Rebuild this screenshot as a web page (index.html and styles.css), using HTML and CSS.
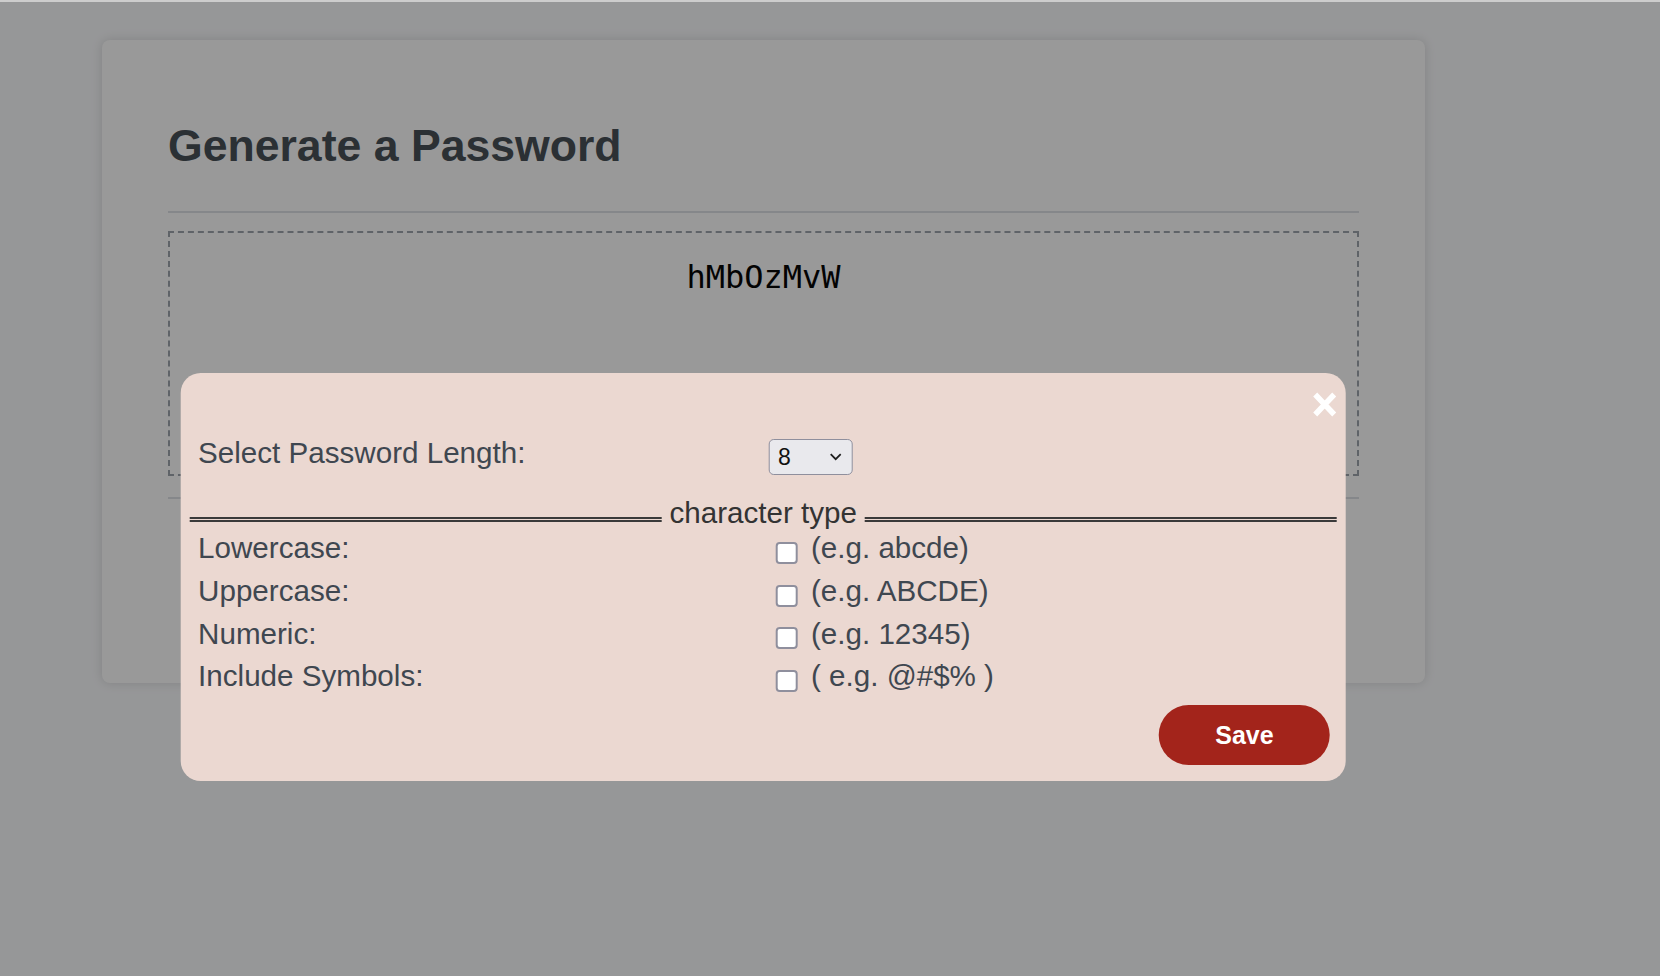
FILE: index.html
```html
<!DOCTYPE html>
<html lang="en">
<head>
<meta charset="utf-8">
<title>Generate a Password</title>
<link rel="stylesheet" href="styles.css">
</head>
<body>
<div class="topbar"></div>
<main class="page">
  <section class="card">
    <h1 class="title">Generate a Password</h1>
    <hr class="rule">
    <div class="output"><span class="password">hMbOzMvW</span></div>
    <hr class="rule rule-low">
  </section>

  <div class="overlay"></div>

  <div class="modal">
    <div class="modal-head">
      <button class="close" type="button" aria-label="Close">
        <svg width="24" height="25" viewBox="0 0 24 25"><path d="M2.5 2.5 L21.5 22.5 M21.5 2.5 L2.5 22.5" stroke="#ffffff" stroke-width="5.5" fill="none"/></svg>
      </button>
    </div>

    <div class="row length-row">
      <label class="label" for="len">Select Password Length:</label>
      <span class="select-wrap">
        <select id="len" class="select"><option>8</option></select>
        <svg class="chev" width="12" height="8" viewBox="0 0 12 8"><path d="M1 1.2 L6 6.2 L11 1.2" stroke="#1f1f1f" stroke-width="1.8" fill="none"/></svg>
      </span>
    </div>

    <div class="divider"><span class="divider-text">character type</span></div>

    <div class="row check-row">
      <span class="label">Lowercase:</span>
      <label class="check"><input type="checkbox" class="box"><span>(e.g. abcde)</span></label>
    </div>
    <div class="row check-row">
      <span class="label">Uppercase:</span>
      <label class="check"><input type="checkbox" class="box"><span>(e.g. ABCDE)</span></label>
    </div>
    <div class="row check-row">
      <span class="label">Numeric:</span>
      <label class="check"><input type="checkbox" class="box"><span>(e.g. 12345)</span></label>
    </div>
    <div class="row check-row">
      <span class="label">Include Symbols:</span>
      <label class="check"><input type="checkbox" class="box"><span>( e.g. @#$% )</span></label>
    </div>

    <div class="actions">
      <button class="save" type="button">Save</button>
    </div>
  </div>
</main>
</body>
</html>
```

FILE: styles.css
```css
html, body {
  margin: 0;
  padding: 0;
}

body {
  background: #fbfcfe;
  font-family: "Liberation Sans", Arial, sans-serif;
  width: 1660px;
  height: 976px;
  overflow: hidden;
}

.topbar {
  position: fixed;
  top: 0;
  left: 0;
  right: 0;
  height: 2px;
  background: #cdcdcd;
  z-index: 3;
}

.page {
  position: relative;
  width: 1323.4px;
  margin-left: 101.6px;
  padding-top: 40px;
}

.card {
  background: #ffffff;
  border-radius: 8px;
  box-shadow: 0 0 12px rgba(0, 0, 0, 0.14);
  padding: 79px 66px 184px 66.4px;
}

.title {
  margin: 0;
  font-size: 44.6px;
  line-height: 54px;
  font-weight: bold;
  color: #495057;
}

.rule {
  margin: 38px 0 0;
  height: 0;
  border: 0;
  border-top: 2px solid #dee2e6;
}

.rule-low {
  margin-top: 21px;
}

.output {
  margin-top: 18px;
  height: 245px;
  box-sizing: border-box;
  border: 2px dashed #9ea5ad;
  padding-top: 25px;
  text-align: center;
}

.password {
  font-family: "DejaVu Sans Mono", "Liberation Mono", monospace;
  font-size: 32px;
  line-height: 38px;
  color: #050505;
}

.overlay {
  position: fixed;
  inset: 0;
  background: rgba(0, 0, 0, 0.4);
  z-index: 1;
}

.modal {
  position: absolute;
  top: 373px;
  left: 50%;
  transform: translateX(-50%);
  width: 1164.6px;
  box-sizing: border-box;
  padding: 19px 8.6px 16px;
  background: #ebd8d1;
  border-radius: 20px;
  z-index: 2;
  font-size: 29.6px;
  color: #3f4750;
}

.modal-head {
  display: flex;
  justify-content: flex-end;
  height: 25px;
}

.close {
  display: block;
  width: 24px;
  height: 25px;
  padding: 0;
  margin: 0;
  border: 0;
  background: none;
}

.close svg {
  display: block;
}

.row {
  display: grid;
  grid-template-columns: 570.9px auto;
  padding-left: 8.5px;
}

.length-row {
  margin-top: 22px;
  align-items: start;
}

.length-row .label {
  line-height: 27.5px;
}

.select-wrap {
  position: relative;
  display: block;
  width: 84px;
  height: 36px;
}

.select {
  appearance: none;
  -webkit-appearance: none;
  display: block;
  width: 84px;
  height: 36px;
  box-sizing: border-box;
  margin: 0;
  padding: 0 0 0 8px;
  border: 1px solid #8f8f9d;
  border-radius: 5px;
  background: #e9e9ed;
  font-family: "Liberation Sans", Arial, sans-serif;
  font-size: 23px;
  color: #111111;
}

.chev {
  position: absolute;
  left: 61px;
  top: 14px;
  pointer-events: none;
}

.divider {
  display: flex;
  align-items: flex-end;
  margin-top: 24px;
  line-height: 28px;
  color: #333333;
}

.divider::before,
.divider::after {
  content: "";
  flex: 1;
  border-top: 5px double #3a3a3a;
  margin-bottom: 5px;
}

.divider-text {
  padding: 0 8px;
}

.check-row {
  line-height: 42.75px;
}

.check {
  display: flex;
  align-items: center;
}

.box {
  appearance: none;
  -webkit-appearance: none;
  width: 22px;
  height: 22px;
  box-sizing: border-box;
  margin: 9px 13px 0 7px;
  border: 2px solid #8f8f9d;
  border-radius: 4px;
  background: #ffffff;
  flex: none;
}

.actions {
  display: flex;
  justify-content: flex-end;
  margin-top: 7px;
  padding-right: 7px;
}

.save {
  width: 171px;
  height: 60px;
  border: 0;
  border-radius: 30px;
  background: #a3241b;
  color: #ffffff;
  font-family: "Liberation Sans", Arial, sans-serif;
  font-size: 25px;
  font-weight: bold;
  padding: 0;
}
```
